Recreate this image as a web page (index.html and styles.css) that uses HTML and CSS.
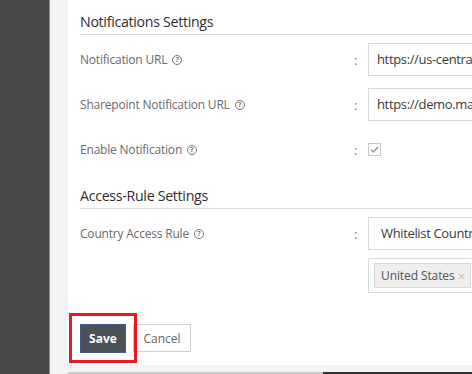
FILE: index.html
```html
<!DOCTYPE html>
<html>
<head>
<meta charset="utf-8">
<link rel="stylesheet" href="styles.css">
</head>
<body>
<div class="app">
  <aside class="sidebar"></aside>
  <div class="gutter"></div>
  <main class="main">
    <div class="panel">
      <h2 class="section-title">Notifications Settings</h2>
      <div class="row">
        <div class="label">Notification URL <span class="help">?</span></div>
        <div class="colon">:</div>
        <div class="input">https://us-central1-demo.example.com</div>
      </div>
      <div class="row">
        <div class="label">Sharepoint Notification URL <span class="help">?</span></div>
        <div class="colon">:</div>
        <div class="input">https://demo.mail.example.com</div>
      </div>
      <div class="row">
        <div class="label">Enable Notification <span class="help">?</span></div>
        <div class="colon">:</div>
        <div class="check-cell">
          <span class="checkbox"><svg width="9" height="7" viewBox="0 0 9 7"><path d="M1 3.8 L3.4 6 L8 1" fill="none" stroke="#8a8a8a" stroke-width="1.2"/></svg></span>
        </div>
      </div>
      <h2 class="section-title second">Access-Rule Settings</h2>
      <div class="row">
        <div class="label">Country Access Rule <span class="help">?</span></div>
        <div class="colon">:</div>
        <div class="input select">Whitelist Countries</div>
      </div>
      <div class="row tags-row">
        <div></div>
        <div></div>
        <div class="tags">
          <span class="tag"><span class="tag-text">United States</span><span class="tag-x">×</span></span>
        </div>
      </div>
      <div class="actions">
        <div class="save-wrap">
          <button class="btn btn-save">Save</button>
          <span class="highlight"></span>
        </div>
        <button class="btn btn-cancel">Cancel</button>
      </div>
    </div>
    <div class="footer-strip"></div>
    <div class="bottom-bar"><div class="bottom-light"></div><div class="bottom-dark"></div></div>
  </main>
</div>
</body>
</html>
```

FILE: styles.css
```css
* { box-sizing: border-box; }
html, body {
  margin: 0;
  padding: 0;
  width: 472px;
  height: 374px;
  overflow: hidden;
  background: #f2f3f5;
  font-family: "Open Sans", "Liberation Sans", sans-serif;
}
.app {
  display: flex;
  height: 374px;
}
.sidebar {
  width: 50px;
  flex: none;
  background: #474747;
  border-right: 1px solid #8e8e8e;
}
.gutter {
  width: 18px;
  flex: none;
  background: #f2f3f5;
}
.main {
  flex: 1;
  min-width: 0;
  display: flex;
  flex-direction: column;
  overflow: hidden;
}
.panel {
  height: 365px;
  background: #fff;
  padding: 11px 0 0 12px;
  overflow: hidden;
}
.section-title {
  margin: 0 0 8px 0;
  font-size: 14.2px;
  letter-spacing: -0.3px;
  font-weight: 400;
  line-height: 22px;
  color: #2e2e2e;
  padding-bottom: 1px;
  border-bottom: 1px solid #dcdcdc;
  width: 420px;
}
.section-title.second {
  margin-top: 19px;
}
.row {
  display: grid;
  grid-template-columns: 274px 14px 220px;
  height: 33px;
  align-items: center;
  margin-bottom: 12px;
}
.label {
  font-size: 12px;
  letter-spacing: -0.2px;
  color: #6a6a6a;
  white-space: nowrap;
  display: flex;
  align-items: center;
}
.help {
  display: inline-flex;
  align-items: center;
  justify-content: center;
  width: 10px;
  height: 10px;
  border: 1px solid #777;
  border-radius: 50%;
  font-size: 7.5px;
  line-height: 1;
  color: #666;
  margin-left: 5px;
  font-weight: 600;
  letter-spacing: 0;
}
.colon {
  font-size: 13px;
  color: #777;
}
.input {
  height: 33px;
  border: 1px solid #d9d9d9;
  border-right: none;
  padding: 0 8px;
  font-size: 13px;
  letter-spacing: -0.35px;
  line-height: 31px;
  color: #3a3a3a;
  white-space: nowrap;
  overflow: hidden;
}
.input.select {
  padding-left: 12px;
}
.check-cell {
  display: flex;
  align-items: center;
}
.checkbox {
  width: 13px;
  height: 13px;
  border: 1px solid #c8c8c8;
  display: inline-flex;
  align-items: center;
  justify-content: center;
}
.tags-row {
  margin-top: -4px;
  height: 35px;
}
.tags {
  height: 35px;
  border: 1px solid #dcdcdc;
  border-right: none;
  padding: 4px 5px;
}
.tag {
  display: flex;
  align-items: center;
  justify-content: space-between;
  width: 97px;
  height: 25px;
  padding: 0 5px 0 6px;
  background: #eeeeee;
  border: 1px solid #d8d8d8;
  font-size: 12px;
  letter-spacing: -0.1px;
  color: #555;
  white-space: nowrap;
}
.tag-x {
  color: #bbb;
  font-size: 13px;
}
.actions {
  display: flex;
  gap: 7px;
  margin-top: 31px;
}
.save-wrap {
  position: relative;
  display: flex;
}
.btn {
  height: 29px;
  font-family: "Open Sans", "Liberation Sans", sans-serif;
  font-size: 12px;
  padding: 0;
  cursor: pointer;
}
.btn-save {
  width: 46px;
  background: #4a5159;
  border: 1px solid #3d5c80;
  color: #fff;
  font-weight: 700;
}
.btn-cancel {
  width: 58px;
  height: 28px;
  background: #fff;
  border: 1px solid #cfcfcf;
  color: #666;
}
.highlight {
  position: absolute;
  left: -11px;
  top: -11px;
  right: -11px;
  bottom: -10px;
  border: 3px solid #e41b23;
  pointer-events: none;
}
.footer-strip {
  flex: 1;
  background: #f3f4f6;
}
.bottom-bar {
  height: 2px;
  display: flex;
}
.bottom-light {
  width: 255px;
  background: #c9c9c9;
}
.bottom-dark {
  flex: 1;
  background: #2e2e2e;
}
```
